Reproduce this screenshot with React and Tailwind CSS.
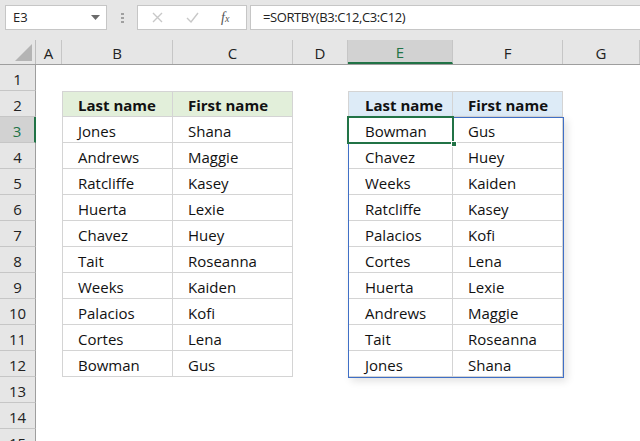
import React from 'react';

const font = { fontFamily: '"Open Sans", "Liberation Sans", Arial, sans-serif' };

const cols = [
  { k: 'A', w: 'w-[26px]' },
  { k: 'B', w: 'w-[111px]' },
  { k: 'C', w: 'w-[120px]' },
  { k: 'D', w: 'w-[55px]' },
  { k: 'E', w: 'w-[105px]' },
  { k: 'F', w: 'w-[110px]' },
  { k: 'G', w: 'flex-1' },
];

const left = [
  ['Jones', 'Shana'], ['Andrews', 'Maggie'], ['Ratcliffe', 'Kasey'], ['Huerta', 'Lexie'],
  ['Chavez', 'Huey'], ['Tait', 'Roseanna'], ['Weeks', 'Kaiden'], ['Palacios', 'Kofi'],
  ['Cortes', 'Lena'], ['Bowman', 'Gus'],
];

const right = [
  ['Bowman', 'Gus'], ['Chavez', 'Huey'], ['Weeks', 'Kaiden'], ['Ratcliffe', 'Kasey'],
  ['Palacios', 'Kofi'], ['Cortes', 'Lena'], ['Huerta', 'Lexie'], ['Andrews', 'Maggie'],
  ['Tait', 'Roseanna'], ['Jones', 'Shana'],
];

function FormulaBar() {
  return (
    <div className="h-[40px] bg-[#e6e6e6] flex items-start pt-[5px] pl-[5px]">
      <div className="w-[102px] h-[25px] bg-white border border-[#c6c6c6] flex items-center justify-between pl-[7px] pr-[6px]">
        <span className="text-[13px] text-[#222]">E3</span>
        <svg width="9" height="5" viewBox="0 0 9 5"><path d="M0 0h9L4.5 5z" fill="#6b6b6b" /></svg>
      </div>
      <div className="w-[30px] h-[25px] flex flex-col items-center justify-center gap-[2px]">
        <div className="w-[3px] h-[2px] bg-[#a0a0a0]" />
        <div className="w-[3px] h-[2px] bg-[#a0a0a0]" />
        <div className="w-[3px] h-[2px] bg-[#a0a0a0]" />
      </div>
      <div className="w-[110px] h-[25px] bg-white border border-[#c6c6c6] flex items-center">
        <svg className="ml-[14px]" width="11" height="11" viewBox="0 0 11 11">
          <path d="M1 1l9 9M10 1l-9 9" stroke="#c8c8c8" strokeWidth="1.4" />
        </svg>
        <svg className="ml-[23px]" width="13" height="11" viewBox="0 0 13 11">
          <path d="M1 6l4 4 7-9" stroke="#c8c8c8" strokeWidth="1.4" fill="none" />
        </svg>
        <span className="ml-[22px] text-[14px] italic text-[#555]" style={{ fontFamily: '"Liberation Serif", serif' }}>
          f<span className="text-[10px]">x</span>
        </span>
      </div>
      <div className="ml-[3px] flex-1 h-[25px] bg-white border border-[#c6c6c6] border-r-0 flex items-center pl-[12px]">
        <span className="text-[13px] tracking-[-0.4px] text-[#222]">=SORTBY(B3:C12,C3:C12)</span>
      </div>
    </div>
  );
}

function Cell({ col, row }) {
  const k = col.k;
  const base = `${col.w} shrink-0 h-full flex items-center text-[15px] text-[#111]`;
  let text = null;
  let cls = '';
  const isLeft = k === 'B' || k === 'C';
  const isRight = k === 'E' || k === 'F';
  if ((isLeft || isRight) && row >= 2 && row <= 12) {
    const data = isLeft ? left : right;
    const ci = k === 'B' || k === 'E' ? 0 : 1;
    if (row === 2) {
      text = ci === 0 ? 'Last name' : 'First name';
      cls += ' font-bold border-t ' + (isLeft ? 'bg-[#e2efda]' : 'bg-[#ddebf7]');
    } else {
      text = data[row - 3][ci];
    }
    cls += ' border-b border-r border-[#d4d4d4]';
    if (ci === 0) cls += ' border-l';
  }
  const pad = k === 'E' ? 'pl-[16px]' : 'pl-[15px]';
  return (
    <div className={base + cls + ' ' + pad}>
      <span className="pt-[3px] leading-none">{text}</span>
    </div>
  );
}

export default function App() {
  const rows = Array.from({ length: 15 }, (_, i) => i + 1);
  return (
    <div className="w-[640px] h-[441px] overflow-hidden bg-white" style={font}>
      <FormulaBar />
      {/* column headers */}
      <div className="h-[25px] flex bg-[#e6e6e6] border-b border-[#9e9e9e]">
        <div className="w-[36px] shrink-0 h-full border-r border-[#bdbdbd] flex items-end justify-end pr-[3px] pb-[3px]">
          <svg width="17" height="17" viewBox="0 0 17 17"><path d="M17 0v17H0z" fill="#b4b4b4" /></svg>
        </div>
        {cols.map((c) => (
          <div
            key={c.k}
            className={`${c.w} shrink-0 h-full flex items-center justify-center text-[15px] border-r border-[#c6c6c6] ${
              c.k === 'E' ? 'bg-[#d2d2d2] text-[#217346] border-b-2 border-b-[#217346]' : 'text-[#222]'
            }`}
          >
            <span className="pt-[3px] leading-none">{c.k}</span>
          </div>
        ))}
      </div>
      {/* grid */}
      <div className="relative">
        {rows.map((r) => (
          <div key={r} className="h-[26px] flex">
            <div
              className={`w-[36px] shrink-0 h-full flex items-center justify-center text-[15px] border-b border-[#c6c6c6] ${
                r === 3
                  ? 'bg-[#d2d2d2] text-[#217346] border-r-2 border-r-[#217346]'
                  : 'bg-[#e6e6e6] text-[#222] border-r border-r-[#9e9e9e]'
              }`}
            >
              <span className="pt-[3px] leading-none">{r}</span>
            </div>
            {cols.map((c) => (
              <Cell key={c.k} col={c} row={r} />
            ))}
          </div>
        ))}
        {/* spill range outline */}
        <div className="absolute left-[348px] top-[52px] w-[216px] h-[261px] border border-[#3f6fc6] shadow-[3px_3px_8px_rgba(0,0,0,0.12)] pointer-events-none" />
        {/* active cell */}
        <div className="absolute left-[347px] top-[51px] w-[107px] h-[28px] border-2 border-[#217346] pointer-events-none" />
        <div className="absolute left-[451px] top-[76px] w-[6px] h-[6px] bg-[#217346] border border-white pointer-events-none" />
      </div>
    </div>
  );
}
